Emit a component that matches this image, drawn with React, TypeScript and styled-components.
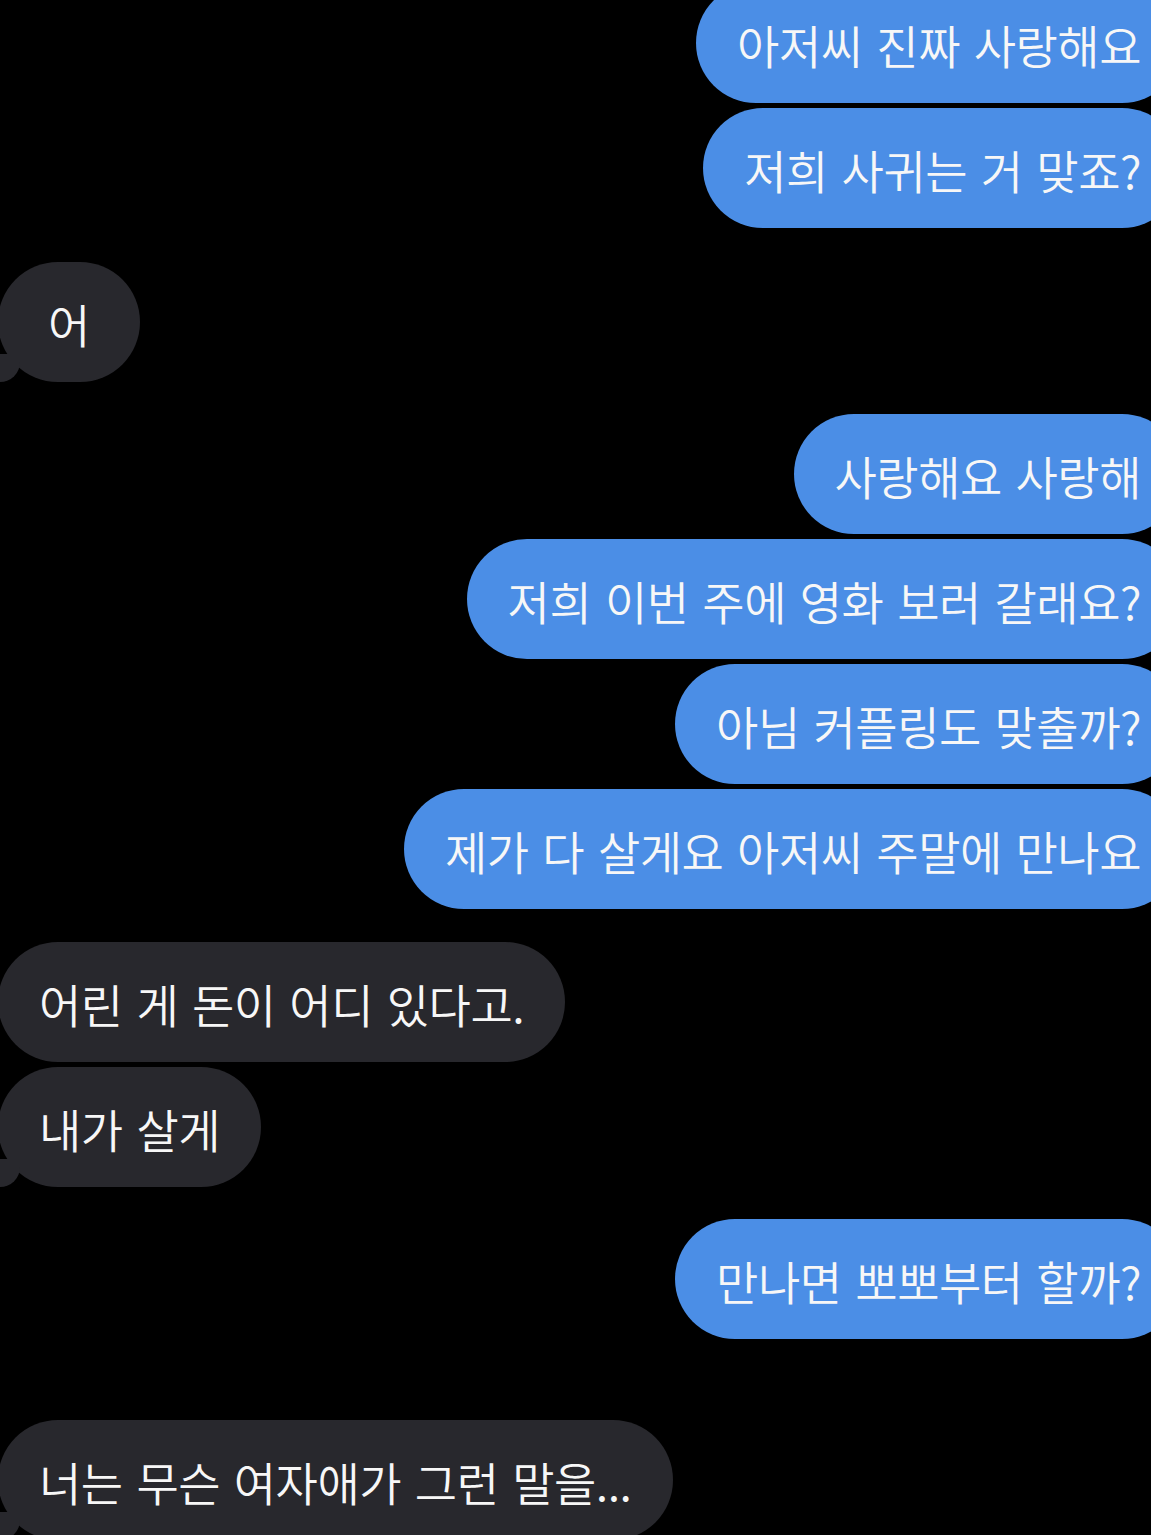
import React from "react";
import styled, { createGlobalStyle, css } from "styled-components";

const GlobalStyle = createGlobalStyle`
  html, body {
    margin: 0;
    padding: 0;
    background: #000;
    overflow: hidden;
  }
  body {
    width: 1151px;
    height: 1535px;
    font-family: "Noto Sans CJK KR", "Noto Sans", sans-serif;
  }
`;

const Screen = styled.div`
  width: 1151px;
  height: 1535px;
  overflow: hidden;
  background: #000;
`;

const Thread = styled.div`
  display: flex;
  flex-direction: column;
  margin: -17px -31px 0 -2px;
`;

type Side = "me" | "them";

const Group = styled.div<{ $side: Side; $top: number }>`
  display: flex;
  flex-direction: column;
  gap: 5px;
  margin-top: ${(p) => p.$top}px;
  align-items: ${(p) => (p.$side === "me" ? "flex-end" : "flex-start")};
`;

const tailThem = css`
  &::before {
    content: "";
    position: absolute;
    bottom: 0;
    left: -6px;
    width: 28px;
    height: 28px;
    background: #28282d;
    border-bottom-right-radius: 20px;
  }
  &::after {
    content: "";
    position: absolute;
    bottom: 0;
    left: -12px;
    width: 12px;
    height: 28px;
    background: #000;
    border-bottom-right-radius: 12px;
  }
`;

const Bubble = styled.div<{ $side: Side; $tail?: boolean; $min?: number }>`
  position: relative;
  box-sizing: border-box;
  height: 120px;
  min-width: ${(p) => p.$min ?? 0}px;
  padding: 2px 41px 0;
  border-radius: 60px;
  display: flex;
  align-items: center;
  justify-content: center;
  white-space: nowrap;
  font-family: "Noto Sans CJK KR", "Noto Sans", sans-serif;
  font-size: 46px;
  font-weight: 350;
  letter-spacing: -0.5px;
  word-spacing: 4px;
  color: #f7f7f7;
  background: ${(p) => (p.$side === "me" ? "#4b8ee6" : "#28282d")};
  ${(p) => p.$side === "them" && p.$tail && tailThem}
`;

const Label = styled.span`
  position: relative;
  z-index: 1;
`;

type Msg = { text: string; min?: number };
type G = { side: Side; top: number; msgs: Msg[] };

const groups: G[] = [
  { side: "me", top: 0, msgs: [{ text: "아저씨 진짜 사랑해요" }, { text: "저희 사귀는 거 맞죠?" }] },
  { side: "them", top: 34, msgs: [{ text: "어", min: 142 }] },
  {
    side: "me",
    top: 32,
    msgs: [
      { text: "사랑해요 사랑해" },
      { text: "저희 이번 주에 영화 보러 갈래요?" },
      { text: "아님 커플링도 맞출까?" },
      { text: "제가 다 살게요 아저씨 주말에 만나요" },
    ],
  },
  { side: "them", top: 33, msgs: [{ text: "어린 게 돈이 어디 있다고." }, { text: "내가 살게" }] },
  { side: "me", top: 32, msgs: [{ text: "만나면 뽀뽀부터 할까?" }] },
  { side: "them", top: 81, msgs: [{ text: "너는 무슨 여자애가 그런 말을..." }] },
];

export default function App() {
  return (
    <Screen>
      <GlobalStyle />
      <Thread>
        {groups.map((g, gi) => (
          <Group key={gi} $side={g.side} $top={g.top}>
            {g.msgs.map((m, mi) => (
              <Bubble key={mi} $side={g.side} $tail={mi === g.msgs.length - 1} $min={m.min}>
                <Label>{m.text}</Label>
              </Bubble>
            ))}
          </Group>
        ))}
      </Thread>
    </Screen>
  );
}
